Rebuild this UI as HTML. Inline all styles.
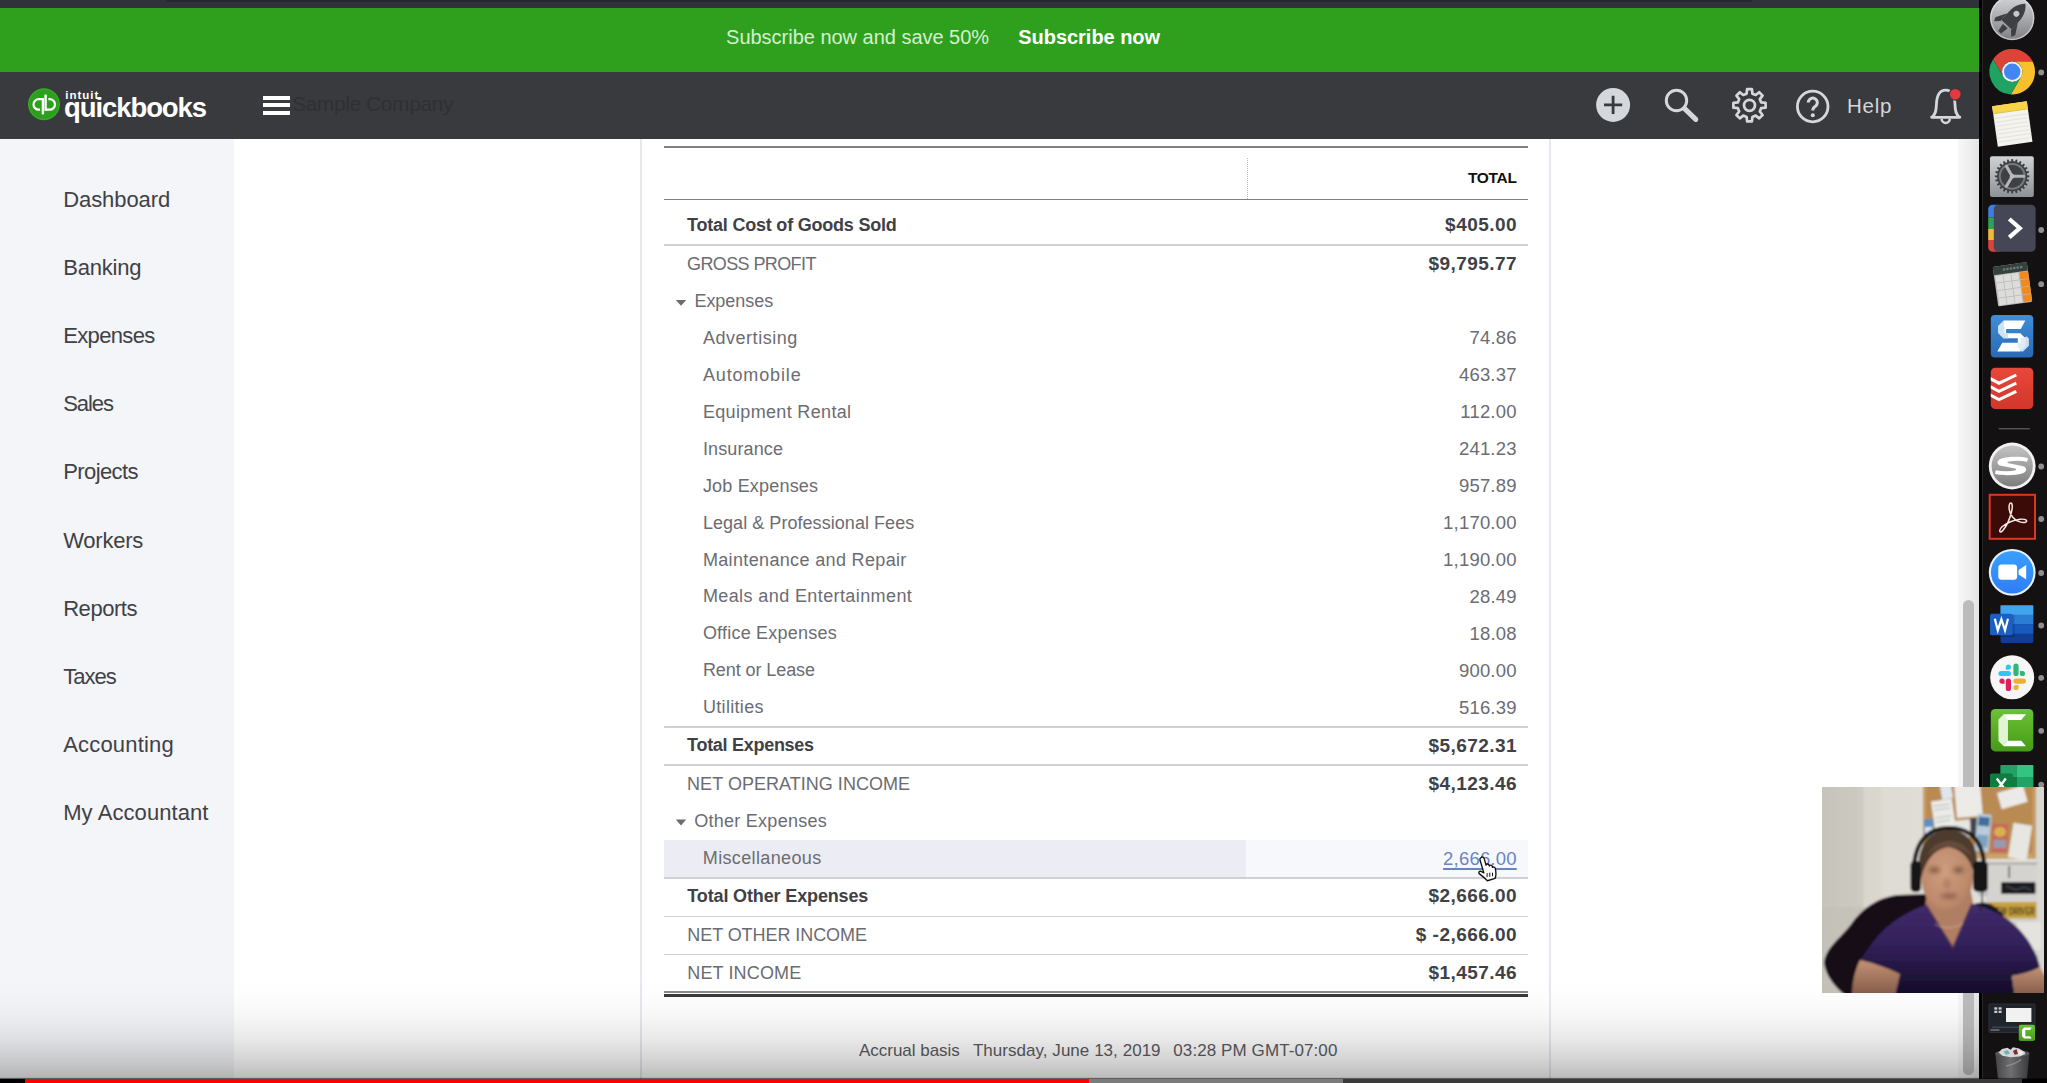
<!DOCTYPE html>
<html><head><meta charset="utf-8"><title>QuickBooks</title>
<style>
html,body{margin:0;padding:0}
body{width:2047px;height:1083px;overflow:hidden;position:relative;background:#141113;font-family:"Liberation Sans",sans-serif}
div,i,span{position:absolute;display:block}
.t{white-space:pre;line-height:normal}
#topstrip{left:0;top:0;width:1979px;height:8px;background:#2f3239}
#topshade{left:166px;top:0;width:1586px;height:2px;background:#26282d}
#banner{left:0;top:8px;width:1979px;height:64px;background:#2ea01e}
#hdr{left:0;top:72px;width:1979px;height:67px;background:#393a3d}
#side{left:0;top:139px;width:234px;height:944px;background:#f4f5f8}
#main{left:234px;top:139px;width:1724px;height:944px;background:#fff}
#track{left:1958px;top:139px;width:21px;height:944px;background:linear-gradient(90deg,#f7f7f7,#ededed 60%,#e4e4e4)}
#thumb{left:1963px;top:600px;width:11px;height:475px;border-radius:6px;background:#bcbcbc}
#edge{left:1979px;top:0;width:3.4px;height:1083px;background:#000;border-right:1px solid #2a2628}
.vb{top:139px;width:2px;height:944px;background:#e6e8ef}
.hl{left:664px;width:864px;height:2px}
#misc{left:664px;top:840px;width:582px;height:37px;background:#ecedf4}
#misc2{left:1246px;top:840px;width:282px;height:37px;background:#f7f8fb}
#dot{left:1247px;top:158px;width:0;height:41px;border-left:1px dotted #b8b8b8}
.bar{left:263px;width:27px;height:4px;background:#fff}
#fade{left:0;top:980px;width:1979px;height:99px;background:linear-gradient(180deg,rgba(0,0,0,0) 0%,rgba(0,0,0,.012) 20%,rgba(0,0,0,.04) 40%,rgba(0,0,0,.09) 60%,rgba(0,0,0,.17) 80%,rgba(0,0,0,.27) 100%)}
#prog{left:0;top:1079px;width:2047px;height:4px;background:#000;box-shadow:0 -1px 1px rgba(0,0,0,.55)}
#prog i{top:0;height:4px}
#prog .a{left:0;width:25px;background:#000}
#prog .b{left:25px;width:1064px;background:#f00}
#prog .c{left:1089px;width:254px;background:#7b7b7b}
#prog .d{left:1343px;width:679px;background:#3a3a3a}
svg{position:absolute;left:0;top:0}

</style></head>
<body>
<div id="topstrip"></div><div id="topshade"></div>
<div id="banner"></div>
<div id="hdr"></div>
<div id="side"></div>
<div id="main"></div>
<div id="track"></div><div id="thumb"></div>
<div id="edge"></div>
<div class="vb" style="left:640px"></div><div class="vb" style="left:1549px"></div>
<div class="bar" style="top:95.5px"></div><div class="bar" style="top:103.3px"></div><div class="bar" style="top:111.1px"></div>
<div id="misc"></div><div id="misc2"></div>
<div class="hl" style="top:146.2px;height:1.6px;background:#808080"></div>
<div class="hl" style="top:198.8px;height:1.6px;background:#808080"></div>
<div id="dot"></div>
<div class="hl" style="top:244.1px;height:1.6px;background:#d0d1d5"></div>
<div class="hl" style="top:726.1px;height:1.6px;background:#d0d1d5"></div>
<div class="hl" style="top:764.2px;height:1.6px;background:#d0d1d5"></div>
<div class="hl" style="top:877.2px;height:1.6px;background:#d0d1d6"></div>
<div class="hl" style="top:915.5px;height:1.6px;background:#d0d1d5"></div>
<div class="hl" style="top:953.5px;height:1.6px;background:#d0d1d5"></div>
<div class="hl" style="top:991.3px;height:1.3px;background:#8a8a8a"></div>
<div class="hl" style="top:994px;height:3px;background:#3a3a3a"></div>

<span class="t" style="top:26.1px;font-size:20px;color:#d6f0cf;letter-spacing:-0.02px;left:726.1px;">Subscribe now and save 50%</span>
<span class="t" style="top:26.1px;font-size:20px;color:#ffffff;font-weight:700;letter-spacing:-0.04px;left:1018.3px;">Subscribe now</span>
<span class="t" style="top:89.2px;font-size:11.5px;color:#ffffff;font-weight:700;letter-spacing:0.97px;left:65.3px;">intuit</span>
<span class="t" style="top:91.9px;font-size:27.5px;color:#ffffff;font-weight:700;letter-spacing:-1.08px;left:64.0px;">quickbooks</span>
<span class="t" style="top:91.5px;font-size:21px;color:#2f3033;letter-spacing:-0.42px;left:292.0px;">Sample Company</span>
<span class="t" style="top:93.9px;font-size:20.5px;color:#d4d7dc;letter-spacing:0.71px;left:1847.0px;">Help</span>
<span class="t" style="top:186.6px;font-size:22px;color:#404145;letter-spacing:-0.07px;left:63.2px;">Dashboard</span>
<span class="t" style="top:254.8px;font-size:22px;color:#404145;letter-spacing:-0.2px;left:63.2px;">Banking</span>
<span class="t" style="top:323.0px;font-size:22px;color:#404145;letter-spacing:-0.65px;left:63.2px;">Expenses</span>
<span class="t" style="top:391.2px;font-size:22px;color:#404145;letter-spacing:-1.05px;left:63.2px;">Sales</span>
<span class="t" style="top:459.4px;font-size:22px;color:#404145;letter-spacing:-0.59px;left:63.2px;">Projects</span>
<span class="t" style="top:527.6px;font-size:22px;color:#404145;letter-spacing:-0.24px;left:63.2px;">Workers</span>
<span class="t" style="top:595.8px;font-size:22px;color:#404145;letter-spacing:-0.46px;left:63.2px;">Reports</span>
<span class="t" style="top:664.0px;font-size:22px;color:#404145;letter-spacing:-1.0px;left:63.2px;">Taxes</span>
<span class="t" style="top:732.2px;font-size:22px;color:#404145;letter-spacing:0.18px;left:63.2px;">Accounting</span>
<span class="t" style="top:800.4px;font-size:22px;color:#404145;letter-spacing:0.08px;left:63.2px;">My Accountant</span>
<span class="t" style="top:169.4px;font-size:15.5px;color:#111111;font-weight:700;letter-spacing:-0.33px;left:1468.0px;">TOTAL</span>
<span class="t" style="top:215.3px;font-size:18px;color:#404145;font-weight:700;letter-spacing:-0.21px;left:687.0px;">Total Cost of Goods Sold</span>
<span class="t" style="top:214.4px;font-size:19px;color:#404145;font-weight:700;letter-spacing:0.45px;right:530.05px;">$405.00</span>
<span class="t" style="top:254.0px;font-size:18px;color:#6b6c72;letter-spacing:-0.6px;left:687.0px;">GROSS PROFIT</span>
<span class="t" style="top:253.1px;font-size:19px;color:#404145;font-weight:700;letter-spacing:0.45px;right:530.05px;">$9,795.77</span>
<span class="t" style="top:290.6px;font-size:18px;color:#6b6c72;letter-spacing:-0.02px;left:694.4px;">Expenses</span>
<span class="t" style="top:327.7px;font-size:18px;color:#6b6c72;letter-spacing:0.54px;left:702.9px;">Advertising</span>
<span class="t" style="top:327.3px;font-size:18.5px;color:#6b6c72;letter-spacing:0.2px;right:530.30px;">74.86</span>
<span class="t" style="top:364.7px;font-size:18px;color:#6b6c72;letter-spacing:0.86px;left:702.9px;">Automobile</span>
<span class="t" style="top:364.2px;font-size:18.5px;color:#6b6c72;letter-spacing:0.2px;right:530.30px;">463.37</span>
<span class="t" style="top:401.6px;font-size:18px;color:#6b6c72;letter-spacing:0.34px;left:702.9px;">Equipment Rental</span>
<span class="t" style="top:401.2px;font-size:18.5px;color:#6b6c72;letter-spacing:0.2px;right:530.30px;">112.00</span>
<span class="t" style="top:438.6px;font-size:18px;color:#6b6c72;letter-spacing:0.12px;left:702.9px;">Insurance</span>
<span class="t" style="top:438.1px;font-size:18.5px;color:#6b6c72;letter-spacing:0.2px;right:530.30px;">241.23</span>
<span class="t" style="top:475.6px;font-size:18px;color:#6b6c72;letter-spacing:0.19px;left:702.9px;">Job Expenses</span>
<span class="t" style="top:475.1px;font-size:18.5px;color:#6b6c72;letter-spacing:0.2px;right:530.30px;">957.89</span>
<span class="t" style="top:512.5px;font-size:18px;color:#6b6c72;letter-spacing:0.05px;left:702.9px;">Legal &amp; Professional Fees</span>
<span class="t" style="top:512.1px;font-size:18.5px;color:#6b6c72;letter-spacing:0.2px;right:530.30px;">1,170.00</span>
<span class="t" style="top:549.5px;font-size:18px;color:#6b6c72;letter-spacing:0.35px;left:702.9px;">Maintenance and Repair</span>
<span class="t" style="top:549.0px;font-size:18.5px;color:#6b6c72;letter-spacing:0.2px;right:530.30px;">1,190.00</span>
<span class="t" style="top:586.4px;font-size:18px;color:#6b6c72;letter-spacing:0.4px;left:702.9px;">Meals and Entertainment</span>
<span class="t" style="top:586.0px;font-size:18.5px;color:#6b6c72;letter-spacing:0.2px;right:530.30px;">28.49</span>
<span class="t" style="top:623.4px;font-size:18px;color:#6b6c72;letter-spacing:0.22px;left:702.9px;">Office Expenses</span>
<span class="t" style="top:622.9px;font-size:18.5px;color:#6b6c72;letter-spacing:0.2px;right:530.30px;">18.08</span>
<span class="t" style="top:660.4px;font-size:18px;color:#6b6c72;letter-spacing:-0.08px;left:702.9px;">Rent or Lease</span>
<span class="t" style="top:659.9px;font-size:18.5px;color:#6b6c72;letter-spacing:0.2px;right:530.30px;">900.00</span>
<span class="t" style="top:697.3px;font-size:18px;color:#6b6c72;letter-spacing:0.33px;left:702.9px;">Utilities</span>
<span class="t" style="top:696.9px;font-size:18.5px;color:#6b6c72;letter-spacing:0.2px;right:530.30px;">516.39</span>
<span class="t" style="top:735.4px;font-size:18px;color:#404145;font-weight:700;letter-spacing:-0.29px;left:687.1px;">Total Expenses</span>
<span class="t" style="top:734.5px;font-size:19px;color:#404145;font-weight:700;letter-spacing:0.45px;right:530.05px;">$5,672.31</span>
<span class="t" style="top:773.7px;font-size:18px;color:#6b6c72;letter-spacing:0.03px;left:687.1px;">NET OPERATING INCOME</span>
<span class="t" style="top:772.8px;font-size:19px;color:#404145;font-weight:700;letter-spacing:0.45px;right:530.05px;">$4,123.46</span>
<span class="t" style="top:811.0px;font-size:18px;color:#6b6c72;letter-spacing:0.27px;left:694.2px;">Other Expenses</span>
<span class="t" style="top:848.0px;font-size:18px;color:#6b6c72;letter-spacing:0.36px;left:702.8px;">Miscellaneous</span>
<span class="t" style="top:847.6px;font-size:18.5px;color:#6884c8;letter-spacing:0.2px;right:530.30px;text-decoration:underline;text-underline-offset:2.5px;text-decoration-thickness:1.6px;">2,666.00</span>
<span class="t" style="top:885.7px;font-size:18px;color:#404145;font-weight:700;letter-spacing:-0.14px;left:687.3px;">Total Other Expenses</span>
<span class="t" style="top:884.8px;font-size:19px;color:#404145;font-weight:700;letter-spacing:0.45px;right:530.05px;">$2,666.00</span>
<span class="t" style="top:925.0px;font-size:18px;color:#6b6c72;letter-spacing:-0.07px;left:687.3px;">NET OTHER INCOME</span>
<span class="t" style="top:924.1px;font-size:19px;color:#404145;font-weight:700;letter-spacing:0.45px;right:530.05px;">$ -2,666.00</span>
<span class="t" style="top:963.2px;font-size:18px;color:#6b6c72;letter-spacing:0.13px;left:687.3px;">NET INCOME</span>
<span class="t" style="top:962.3px;font-size:19px;color:#404145;font-weight:700;letter-spacing:0.45px;right:530.05px;">$1,457.46</span>
<span class="t" style="top:1040.8px;font-size:17px;color:#5a5b5f;letter-spacing:-0.02px;left:859.0px;">Accrual basis</span>
<span class="t" style="top:1040.8px;font-size:17px;color:#5a5b5f;letter-spacing:0.04px;left:972.9px;">Thursday, June 13, 2019</span>
<span class="t" style="top:1040.8px;font-size:17px;color:#5a5b5f;letter-spacing:0.09px;left:1173.3px;">03:28 PM GMT-07:00</span>
<svg width="2047" height="1083" viewBox="0 0 2047 1083">

<!-- ===== header / page icons ===== -->
<g id="qb">
 <circle cx="44" cy="104.2" r="16" fill="#2ca01c"/>
 <circle cx="44" cy="104.2" r="15.3" fill="none" stroke="#4db53e" stroke-width="0.9" opacity=".55"/>
 <g fill="none" stroke="#fff" stroke-width="2.2">
  <path d="M42.9,99.1 h-4.100 a5.300,5.300 0 0 0 0,10.600 h1.300"/>
  <path d="M42.9,98 v16.400" stroke-width="2.400"/>
  <path d="M45.6,109.700 h4.100 a5.300,5.300 0 0 0 0,-10.600 h-1.300"/>
  <path d="M45.6,94.600 v16.200" stroke-width="2.400"/>
 </g>
</g>
<g id="hicons" fill="none" stroke="#d4d7dc">
 <circle cx="1613.1" cy="104.9" r="17" fill="#d4d7dc" stroke="none"/>
 <path d="M1604,104.9 h18.200 M1613.1,95.800 v18.200" stroke="#393a3d" stroke-width="2.800"/>
 <circle cx="1676.500" cy="100.500" r="10.200" stroke-width="3"/>
 <path d="M1684.600,108.600 L1695.800,119.400" stroke-width="5" stroke-linecap="round"/>
 <path d="M1746.6,93.7 L1747.1,89.2 L1751.9,89.2 L1752.4,93.7 L1755.7,95.0 L1759.2,92.2 L1762.6,95.6 L1759.8,99.1 L1761.1,102.4 L1765.6,102.9 L1765.6,107.7 L1761.1,108.2 L1759.8,111.5 L1762.6,115.0 L1759.2,118.4 L1755.7,115.6 L1752.4,116.9 L1751.9,121.4 L1747.1,121.4 L1746.6,116.9 L1743.3,115.6 L1739.8,118.4 L1736.4,115.0 L1739.2,111.5 L1737.9,108.2 L1733.4,107.7 L1733.4,102.9 L1737.9,102.4 L1739.2,99.1 L1736.4,95.6 L1739.8,92.2 L1743.3,95.0Z" stroke-width="2.700" stroke-linejoin="round"/>
 <circle cx="1749.5" cy="105.3" r="5.500" stroke-width="2.700"/>
 <circle cx="1812.7" cy="106.5" r="15.300" stroke-width="2.800"/>
 <path d="M1808.300,102.600 a4.500,4.500 0 1 1 6.800,3.900 c-1.600,1 -2.300,1.900 -2.300,3.900" stroke-width="3"/>
 <circle cx="1812.800" cy="115.200" r="2" fill="#d4d7dc" stroke="none"/>
 <path d="M1931.600,117.300 c4.200,-2.600 4.600,-7 4.800,-12.500 c0.300,-9 3.500,-14.600 9.300,-14.600 s9,5.600 9.300,14.600 c0.200,5.500 0.600,9.900 4.800,12.500 z" stroke-width="2.800" stroke-linejoin="round"/>
 <path d="M1941.600,118.800 a4.100,4.100 0 0 0 8.200,0" stroke-width="2.500"/>
 <circle cx="1955.3" cy="94.2" r="6.600" fill="#393a3d" stroke="none"/>
 <circle cx="1955.3" cy="94.2" r="5.300" fill="#e8383d" stroke="none"/>
</g>
<g fill="#6b6c72">
 <path d="M675.8,299.9 h10.400 l-5.200,5.800z"/>
 <path d="M675.8,819.6 h10.400 l-5.200,5.800z"/>
</g>
<!-- hand cursor -->
<g id="cursor" transform="translate(1477.2,856) scale(0.9)">
 <path d="M4.500,1.500 c1.300,-0.900 2.900,0 3.300,1.500 l2,7.200 c0.200,-1.500 2.500,-1.800 3.200,-0.300 l0.500,1.200 c0.500,-1.300 2.700,-1.200 3.200,0.300 l0.400,1.300 c0.800,-1 2.700,-0.500 3,1 c0.900,4 1.500,7.500 -0.300,11.200 l-8.500,2.600 c-2.600,-2.700 -5.600,-5.200 -8.800,-7.600 c-1.600,-1.200 -0.300,-3.500 1.700,-2.800 l3.200,1.600 l-4.300,-14.200 c-0.300,-1.200 0.400,-2.500 1.400,-3z" fill="#fff" stroke="#111" stroke-width="1.5" stroke-linejoin="round"/>
 <path d="M11,19 v4.500 M14,18.500 v4.500 M17,18.500 v4" stroke="#111" stroke-width="1.100" fill="none"/>
</g>
<defs>
<linearGradient id="gLaunch" x1="0" y1="0" x2="0" y2="1"><stop offset="0" stop-color="#d2d4d6"/><stop offset="1" stop-color="#7e8084"/></linearGradient>
<linearGradient id="gSys" x1="0" y1="0" x2="0" y2="1"><stop offset="0" stop-color="#cfd3d6"/><stop offset="1" stop-color="#8e9296"/></linearGradient>
<linearGradient id="gSnag" x1="0" y1="0" x2="0" y2="1"><stop offset="0" stop-color="#3f8fd8"/><stop offset="1" stop-color="#2a68b4"/></linearGradient>
<linearGradient id="gTodo" x1="0" y1="0" x2="0" y2="1"><stop offset="0" stop-color="#e8483a"/><stop offset="1" stop-color="#d2372b"/></linearGradient>
<linearGradient id="gScan" x1="0" y1="0" x2="0" y2="1"><stop offset="0" stop-color="#c4c4c4"/><stop offset="1" stop-color="#7d7d7d"/></linearGradient>
<linearGradient id="gZoom" x1="0" y1="0" x2="0" y2="1"><stop offset="0" stop-color="#38a0ff"/><stop offset="1" stop-color="#2f7df6"/></linearGradient>
<linearGradient id="gCam" x1="0" y1="0" x2="0" y2="1"><stop offset="0" stop-color="#6cc234"/><stop offset="1" stop-color="#469a18"/></linearGradient>
<linearGradient id="gTrash" x1="0" y1="0" x2="1" y2="0"><stop offset="0" stop-color="#4a4a4c"/><stop offset=".45" stop-color="#77777a"/><stop offset="1" stop-color="#3c3c3e"/></linearGradient>
<clipPath id="cpWeb"><rect x="1822" y="787" width="222" height="206"/></clipPath>
<clipPath id="cpAbove"><rect x="1983" y="0" width="64" height="787"/></clipPath>
</defs>
<g id="dock">
<circle cx="2041.2" cy="72.4" r="2.9" fill="#8f8f91"/>
<circle cx="2041.2" cy="230" r="2.9" fill="#8f8f91"/>
<circle cx="2041.2" cy="284.2" r="2.9" fill="#8f8f91"/>
<circle cx="2041.2" cy="466.5" r="2.9" fill="#8f8f91"/>
<circle cx="2041.2" cy="519" r="2.9" fill="#8f8f91"/>
<circle cx="2041.2" cy="573" r="2.9" fill="#8f8f91"/>
<circle cx="2041.2" cy="625.5" r="2.9" fill="#8f8f91"/>
<circle cx="2041.2" cy="677.8" r="2.9" fill="#8f8f91"/>
<circle cx="2041.2" cy="730.8" r="2.9" fill="#8f8f91"/>
<g><circle cx="2012.2" cy="18" r="22.2" fill="url(#gLaunch)"/><circle cx="2012.2" cy="18" r="21.4" fill="none" stroke="#e4e5e6" stroke-width="1.2" opacity=".7"/>
<g transform="translate(2011.7,19) rotate(42) scale(1.28)" fill="#3d3f43">
<path d="M0,-16 c4.500,4 5.500,9 5.500,14 v8 h-11 v-8 c0,-5 1,-10 5.500,-14z"/>
<path d="M-5.500,-1 l-5,8.500 l1.500,3 l3.500,-3.500z M5.500,-1 l5,8.500 l-1.500,3 l-3.500,-3.500z"/>
<path d="M-2.500,7.500 h5 l-1,6.500 h-3z"/>
<circle cx="0" cy="-5.500" r="2.300" fill="#c5c7c9"/>
</g></g>
<g><path d="M2012.20,61.50 L2032.59,61.50 A22.8,22.8 0 0 0 1993.17,59.14 L2003.37,76.80 A10.2,10.2 0 0 1 2012.20,61.50Z" fill="#db4437"/><path d="M2021.03,76.80 L2010.84,94.46 A22.8,22.8 0 0 0 2032.59,61.50 L2012.20,61.50 A10.2,10.2 0 0 1 2021.03,76.80Z" fill="#f6c12d"/><path d="M2003.37,76.80 L1993.17,59.14 A22.8,22.8 0 0 0 2010.84,94.46 L2021.03,76.80 A10.2,10.2 0 0 1 2003.37,76.80Z" fill="#1ea362"/><circle cx="2012.2" cy="71.7" r="10.2" fill="#f1f1f1"/><circle cx="2012.2" cy="71.7" r="8.2" fill="#4285f4"/></g>
<g transform="translate(2012.300,124) rotate(-8)">
<rect x="-17.500" y="-20.500" width="35" height="41" fill="#f4f3ee"/>
<rect x="-17.500" y="-20.500" width="35" height="7.500" fill="#f7d546"/>
<path d="M-17.500,-12.800 h35" stroke="#d9b72f" stroke-width="0.8"/>
<g stroke="#dddcd6" stroke-width="0.7"><path d="M-17.500,-8 h35"/><path d="M-17.500,-4 h35"/><path d="M-17.500,0 h35"/><path d="M-17.500,4 h35"/><path d="M-17.500,8 h35"/><path d="M-17.500,12 h35"/><path d="M-17.500,16 h35"/></g>
</g>
<g><rect x="1990" y="156.200" width="43.800" height="40.800" rx="2" fill="url(#gSys)"/>
<path d="M2027.16,175.20 L2029.48,175.49 L2029.48,177.11 L2027.16,177.40 L2026.93,179.11 L2029.10,179.99 L2028.68,181.56 L2026.37,181.23 L2025.70,182.83 L2027.57,184.23 L2026.76,185.65 L2024.61,184.73 L2023.55,186.10 L2025.00,187.94 L2023.84,189.10 L2022.00,187.65 L2020.63,188.71 L2021.55,190.86 L2020.13,191.67 L2018.73,189.80 L2017.13,190.47 L2017.46,192.78 L2015.89,193.20 L2015.01,191.03 L2013.30,191.26 L2013.01,193.58 L2011.39,193.58 L2011.10,191.26 L2009.39,191.03 L2008.51,193.20 L2006.94,192.78 L2007.27,190.47 L2005.67,189.80 L2004.27,191.67 L2002.85,190.86 L2003.77,188.71 L2002.40,187.65 L2000.56,189.10 L1999.40,187.94 L2000.85,186.10 L1999.79,184.73 L1997.64,185.65 L1996.83,184.23 L1998.70,182.83 L1998.03,181.23 L1995.72,181.56 L1995.30,179.99 L1997.47,179.11 L1997.24,177.40 L1994.92,177.11 L1994.92,175.49 L1997.24,175.20 L1997.47,173.49 L1995.30,172.61 L1995.72,171.04 L1998.03,171.37 L1998.70,169.77 L1996.83,168.37 L1997.64,166.95 L1999.79,167.87 L2000.85,166.50 L1999.40,164.66 L2000.56,163.50 L2002.40,164.95 L2003.77,163.89 L2002.85,161.74 L2004.27,160.93 L2005.67,162.80 L2007.27,162.13 L2006.94,159.82 L2008.51,159.40 L2009.39,161.57 L2011.10,161.34 L2011.39,159.02 L2013.01,159.02 L2013.30,161.34 L2015.01,161.57 L2015.89,159.40 L2017.46,159.82 L2017.13,162.13 L2018.73,162.80 L2020.13,160.93 L2021.55,161.74 L2020.63,163.89 L2022.00,164.95 L2023.84,163.50 L2025.00,164.66 L2023.55,166.50 L2024.61,167.87 L2026.76,166.95 L2027.57,168.37 L2025.70,169.77 L2026.37,171.37 L2028.68,171.04 L2029.10,172.61 L2026.93,173.49Z" fill="#3e4043"/>
<circle cx="2012.2" cy="176.3" r="13.400" fill="#77797c"/>
<circle cx="2012.2" cy="176.3" r="11.400" fill="#3f4043"/>
<g stroke="#b4b6b8" stroke-width="3" stroke-linecap="round"><path d="M2012.2,176.3 L2006.4,166.3 M2012.2,176.3 L2023.7,176.3 M2012.2,176.3 L2006.4,186.3"/></g>
<circle cx="2012.2" cy="176.3" r="2.400" fill="#b9bbbd"/>
</g>
<g>
<clipPath id="cpG"><rect x="1988.200" y="204.700" width="14" height="47.100" rx="4.500"/></clipPath>
<g clip-path="url(#cpG)"><rect x="1988" y="204" width="14" height="13.500" fill="#3f7de0"/><rect x="1988" y="217.500" width="14" height="11.500" fill="#2fa354"/><rect x="1988" y="229" width="14" height="11" fill="#f0bb35"/><rect x="1988" y="240" width="14" height="12" fill="#d9453a"/></g>
<rect x="1993.800" y="204.700" width="41.800" height="47.100" rx="4.500" fill="#454757"/>
<path d="M2009.300,219 l10.500,9.200 l-10.500,9.200" fill="none" stroke="#fff" stroke-width="4.200" stroke-linejoin="miter"/>
</g>
<g transform="translate(2012.500,284.300) rotate(-8) scale(0.93)">
<rect x="-18.500" y="-21.500" width="37" height="43" rx="1.500" fill="#b9b9b7"/>
<rect x="-18.500" y="-21.500" width="37" height="9" fill="#36403d"/>
<path d="M-8,-17 h22" stroke="#6d7a76" stroke-width="2.500" stroke-dasharray="2.500 1.200"/>
<rect x="-17.0" y="-11.5" width="7.800" height="7.400" fill="#dcdcda"/><rect x="-17.0" y="-3.3" width="7.800" height="7.400" fill="#dcdcda"/><rect x="-17.0" y="4.9" width="7.800" height="7.400" fill="#dcdcda"/><rect x="-17.0" y="13.1" width="7.800" height="7.400" fill="#dcdcda"/><rect x="-8.4" y="-11.5" width="7.800" height="7.400" fill="#dcdcda"/><rect x="-8.4" y="-3.3" width="7.800" height="7.400" fill="#dcdcda"/><rect x="-8.4" y="4.9" width="7.800" height="7.400" fill="#dcdcda"/><rect x="-8.4" y="13.1" width="7.800" height="7.400" fill="#dcdcda"/><rect x="0.2" y="-11.5" width="7.800" height="7.400" fill="#dcdcda"/><rect x="0.2" y="-3.3" width="7.800" height="7.400" fill="#dcdcda"/><rect x="0.2" y="4.9" width="7.800" height="7.400" fill="#dcdcda"/><rect x="0.2" y="13.1" width="7.800" height="7.400" fill="#dcdcda"/><rect x="9.200" y="-11.5" width="9.300" height="7.400" fill="#f08a1c"/><rect x="9.200" y="-3.3" width="9.300" height="7.400" fill="#f08a1c"/><rect x="9.200" y="4.9" width="9.300" height="7.400" fill="#f08a1c"/><rect x="9.200" y="13.1" width="9.300" height="7.400" fill="#f08a1c"/>
</g>
<g><rect x="1990.800" y="315" width="42.500" height="42.500" rx="4" fill="url(#gSnag)"/>
<path d="M2025.300,320.500 h-21.500 l-5.500,5.500 v7 l5.200,5.200 h14.300 v4.600 h-15.500 l-5,8.700 h22.500 l5.800,-5.800 v-7.200 l-5.200,-5.200 h-14.300 v-4.200 h14.700z" fill="#fff"/>
<path d="M2003.800,320.500 l-5.500,5.500 v7 l5.200,5.200 h4.500 v-4.900 l-3.500,0 v-4.200z" fill="#cfe3f6"/>
<path d="M2020.600,338.200 v4.600 h-3 l0,4 l3,4.700 h2.500 l5.800,-5.800 v-7.200 l-2,-2z" fill="#dcebf8" opacity=".9"/>
</g>
<g><rect x="1990.800" y="367.700" width="42.500" height="41.300" rx="4.500" fill="url(#gTodo)"/>
<clipPath id="cpT"><rect x="1990.800" y="367.700" width="42.500" height="41.300" rx="4.500"/></clipPath>
<g clip-path="url(#cpT)" fill="none" stroke="#fff" stroke-width="3" stroke-linejoin="miter">
<path d="M1989.500,378.200 l9.500,5 l17.300,-8.200"/><path d="M1989.500,386.400 l9.500,5 l17.300,-8.200"/><path d="M1989.500,394.600 l9.500,5 l17.300,-8.200"/></g>
</g>
<rect x="1998.700" y="428.100" width="31.100" height="1.300" fill="#5a5a5c"/>
<g><circle cx="2012.2" cy="466" r="23.400" fill="#f2f2f2"/><circle cx="2012.2" cy="466" r="20.600" fill="url(#gScan)"/>
<path d="M2028,458 c-8,-1.800 -20,-1.500 -26.500,0.500 c-5,1.600 -5.500,6 -0.500,7.300 l14,2.700 c1.800,0.400 1.500,1.700 -0.300,2 c-6,1 -13,0.800 -19,-0.300 l-0.700,3.900 c8,1.700 20,1.600 27,-0.500 c5.500,-1.700 5.700,-6.400 0.300,-7.600 l-13.800,-2.700 c-1.600,-0.400 -1.400,-1.600 0.400,-1.900 c6,-0.900 12.500,-0.700 18.300,0.300z" fill="#fff"/>
</g>
<g><rect x="1989.700" y="494.800" width="45.300" height="44" fill="#3b0b08" stroke="#d93a1f" stroke-width="2"/>
<path d="M2000,531.500 c-1.500,-2.500 3.500,-6.800 10.500,-9.700 c6.500,-2.700 14,-3.600 15.800,-1.500 c1.500,1.800 -2,3 -6.500,1.600 c-5.500,-1.700 -9.800,-6.800 -10.600,-12.500 c-0.500,-3.800 0.300,-6.300 1.600,-6.300 c1.700,0 1.900,4 0.600,9.200 c-1.700,6.800 -5.300,14.300 -8.200,17.800 c-1.400,1.700 -2.700,2.200 -3.200,1.400z" fill="none" stroke="#f5e9e6" stroke-width="1.500"/>
</g>
<g><circle cx="2012.2" cy="572.300" r="23.400" fill="#e8f1ff"/><circle cx="2012.2" cy="572.300" r="21.300" fill="url(#gZoom)"/>
<rect x="1998.300" y="564.500" width="18.800" height="15.300" rx="3.200" fill="#fff"/>
<path d="M2018.600,570 l7.600,-5 v14.600 l-7.600,-5z" fill="#fff"/>
</g>
<g><rect x="2000.500" y="605.300" width="32.800" height="37.700" rx="2" fill="#103f91"/>
<rect x="2000.500" y="605.300" width="32.800" height="9.600" fill="#41a5ee"/><rect x="2000.500" y="614.900" width="32.800" height="9.400" fill="#2b7cd3"/><rect x="2000.500" y="624.300" width="32.800" height="9.400" fill="#185abd"/>
<rect x="2000.500" y="615" width="14" height="22" fill="#000" opacity=".18"/>
<rect x="1990" y="613.700" width="22.800" height="21.600" rx="1.800" fill="#1c5fc4"/>
<path d="M1994.800,618.800 l3,11.600 l3.600,-11 l3.600,11 l3,-11.600" fill="none" stroke="#fff" stroke-width="2.200" stroke-linejoin="miter"/>
</g>
<g><circle cx="2012.2" cy="677.3" r="22" fill="#f6f6f6"/><g transform="translate(2012.2,677.3) rotate(0)" fill="#36c5f0"><rect x="-13.8" y="-6.4" width="12.6" height="5.2" rx="2.6"/><path d="M-6.4,-10.2 a2.6,2.6 0 1 1 2.6,2.6 h-2.6 z"/></g><g transform="translate(2012.2,677.3) rotate(90)" fill="#2eb67d"><rect x="-13.8" y="-6.4" width="12.6" height="5.2" rx="2.6"/><path d="M-6.4,-10.2 a2.6,2.6 0 1 1 2.6,2.6 h-2.6 z"/></g><g transform="translate(2012.2,677.3) rotate(180)" fill="#ecb22e"><rect x="-13.8" y="-6.4" width="12.6" height="5.2" rx="2.6"/><path d="M-6.4,-10.2 a2.6,2.6 0 1 1 2.6,2.6 h-2.6 z"/></g><g transform="translate(2012.2,677.3) rotate(270)" fill="#e01e5a"><rect x="-13.8" y="-6.4" width="12.6" height="5.2" rx="2.6"/><path d="M-6.4,-10.2 a2.6,2.6 0 1 1 2.6,2.6 h-2.6 z"/></g></g>
<g><rect x="1990.800" y="708.900" width="42.500" height="42.500" rx="4.500" fill="url(#gCam)"/>
<path d="M2026,714.300 h-22 l-5.300,5.300 v21.400 l5.300,5.300 h22 l-4.800,-5.600 h-13.500 v-20.600 h13.500z" fill="#fff"/>
<path d="M2004,714.300 l-5.300,5.300 v21.400 l5.300,5.300 l3.700,-5.600 v-20.600z" fill="#e3f3d6"/>
</g>
<g clip-path="url(#cpAbove)"><rect x="2000.500" y="765" width="32.800" height="37.700" rx="2" fill="#185c37"/>
<rect x="2000.500" y="765" width="16.400" height="12" fill="#21a366"/><rect x="2016.900" y="765" width="16.400" height="12" fill="#33c481"/>
<rect x="2000.500" y="777" width="16.400" height="12" fill="#107c41"/><rect x="2016.900" y="777" width="16.400" height="12" fill="#21a366"/>
<rect x="1990" y="773.400" width="22.800" height="21.600" rx="1.800" fill="#107c41"/>
<path d="M1996.800,778.500 l9,12 M2005.800,778.500 l-9,12" stroke="#fff" stroke-width="2.400"/>
<circle cx="2041.200" cy="784.600" r="2.900" fill="#8f8f91"/>
</g>
<g><rect x="1988.900" y="1004" width="46.100" height="28.500" rx="1" fill="#20242b"/>
<rect x="1988.900" y="1004" width="46.100" height="28.500" rx="1" fill="none" stroke="#3a3f47" stroke-width=".6"/>
<rect x="2006" y="1008" width="25.400" height="14" fill="#f1f1f1"/>
<g fill="#c9ccd0"><rect x="1994.300" y="1007.300" width="3" height="2.300"/><rect x="1998.600" y="1007.300" width="3" height="2.300"/><rect x="1994.300" y="1010.700" width="3" height="2.300"/><rect x="1998.600" y="1010.700" width="3" height="2.300"/></g>
<rect x="1992" y="1026.500" width="26" height="1.600" fill="#3a4450"/><rect x="1990.500" y="1029" width="9" height="2" fill="#59626d"/>
<rect x="2018.800" y="1024.800" width="16.200" height="16.200" rx="1.800" fill="url(#gCam)"/>
<path d="M2031.800,1027.600 h-7.600 l-2.200,2.200 v6.600 l2.200,2.200 h7.600 l-1.800,-2.300 h-4.700 v-6.400 h4.700z" fill="#fff"/>
</g>
<g><path d="M1995.300,1053.500 h34.200 l-2.700,25.500 h-28.800z" fill="url(#gTrash)" opacity=".92"/>
<ellipse cx="2012.400" cy="1053.500" rx="17.100" ry="3.400" fill="#58585a"/>
<path d="M1998.500,1052.500 l3.500,-3.500 l5.500,-1.200 l3,2 l2.500,-2.500 l6,1.200 l5.500,3.200 l1,2.300 l-6,2.500 l-9,0.800 l-8,-1.500z" fill="#d8d6d6"/>
<path d="M2003.500,1051.500 l4,-1.500 l2.500,3.500 l-4,1.500z" fill="#6bb5b0"/><path d="M2013,1051 l3.500,-2 l1.500,5 l-3.500,0.800z" fill="#7a2f35"/><path d="M2019,1050.500 l4,1.500 l-1.500,3 l-3,-0.500z" fill="#efefef"/>
<path d="M2006,1066 c5,-1 11,-3 15,-6.500" stroke="#9a9a9c" stroke-width="1.400" fill="none" opacity=".7"/>
</g>
</g><!-- ===== webcam picture-in-picture ===== -->
<defs>
<filter id="fSoft" x="-5%" y="-5%" width="110%" height="110%"><feGaussianBlur stdDeviation="0.9"/></filter>
<filter id="fSoft2" x="-20%" y="-20%" width="140%" height="140%"><feGaussianBlur stdDeviation="2.2"/></filter>
<linearGradient id="gWall" x1="0" y1="0" x2="1" y2="0"><stop offset="0" stop-color="#c6c3ba"/><stop offset=".19" stop-color="#cdcac1"/><stop offset=".2" stop-color="#d9d6cd"/><stop offset=".27" stop-color="#dad7ce"/><stop offset=".28" stop-color="#dfdcd4"/><stop offset="1" stop-color="#e3e1da"/></linearGradient>
<linearGradient id="gShirt" x1="0" y1="0" x2="0" y2="1"><stop offset="0" stop-color="#412b6b"/><stop offset=".45" stop-color="#32205a"/><stop offset=".8" stop-color="#1e1339"/><stop offset="1" stop-color="#140c29"/></linearGradient>
<linearGradient id="gArm" x1="0" y1="0" x2="0" y2="1"><stop offset="0" stop-color="#c39273"/><stop offset="1" stop-color="#83594a"/></linearGradient>
<radialGradient id="gFace" cx=".45" cy=".45" r=".65"><stop offset="0" stop-color="#cf9d7f"/><stop offset=".7" stop-color="#bd8a6c"/><stop offset="1" stop-color="#a5745a"/></radialGradient>
</defs>
<g clip-path="url(#cpWeb)">
<g transform="translate(1822,787)" filter="url(#fSoft)">
 <rect x="-3" y="-3" width="228" height="212" fill="url(#gWall)"/>
 <rect x="-3" y="120" width="50" height="90" fill="#c2bfb6" opacity=".6"/>
 <!-- cork board -->
 <rect x="101" y="-3" width="113" height="75" fill="#b98a51"/>
 <rect x="101" y="66.500" width="113" height="5.500" fill="#caa26c"/>
 <rect x="101" y="-3" width="3" height="75" fill="#c79d66"/><rect x="210.500" y="-3" width="3.500" height="75" fill="#c79d66"/>
 <rect x="214" y="-3" width="11" height="212" fill="#d9d7d1"/>
 <!-- pinned papers -->
 <rect x="119" y="-2" width="11" height="14" fill="#dfe6ee" transform="rotate(-10 124 5)"/>
 <rect x="111" y="13" width="21" height="30" fill="#ebebe8" transform="rotate(-8 121 28)"/>
 <g stroke="#a9acb2" stroke-width=".8" transform="rotate(-8 121 28)"><path d="M113,18 h16 M113,22 h16 M113,30 h16 M113,34 h14"/></g>
 <rect x="133.500" y="-3" width="26" height="33" fill="#ecebe8" transform="rotate(-5 146 14)"/>
 <rect x="177" y="2" width="27" height="17" fill="#eceae6" transform="rotate(-16 190 11)"/>
 <rect x="102" y="32" width="9.500" height="17.500" fill="#5d8fc0"/><rect x="103" y="40" width="7.500" height="6" fill="#d7e3ee"/>
 <rect x="133.500" y="33" width="15" height="17.500" fill="#e6e6e3" transform="rotate(-6 141 42)"/>
 <rect x="148.500" y="31" width="6" height="19" fill="#3a4652"/>
 <rect x="154" y="27" width="14" height="38" fill="#b9cbda" transform="rotate(5 161 46)"/>
 <rect x="155.500" y="30" width="11" height="9" fill="#3f6e9d" transform="rotate(5 161 46)"/><rect x="155.500" y="48" width="11" height="12" fill="#7fa2c1" transform="rotate(5 161 46)"/>
 <rect x="170" y="37" width="15.500" height="28.500" fill="#c7685a" transform="rotate(2 178 51)"/>
 <ellipse cx="178" cy="45" rx="6" ry="5" fill="#d9b04f"/><rect x="171.500" y="53" width="12.500" height="8" fill="#8aa8c8" opacity=".8"/>
 <rect x="188.500" y="37" width="19" height="35" fill="#e7e6e1" transform="rotate(9 198 55)"/>
 <!-- white board lower right -->
 <rect x="164" y="75" width="51" height="134" fill="#d4d3cf"/>
 <rect x="164" y="75" width="51" height="3" fill="#b7b6b2"/>
 <rect x="186.500" y="79" width="1.500" height="12" fill="#4a4a4a"/>
 <rect x="156" y="96" width="10" height="13" fill="#bfc3c7"/>
 <rect x="179" y="95" width="34.500" height="12" rx="1.500" fill="#1d1d20"/>
 <path d="M184,99 l10,4 l8,-3 l7,3" stroke="#55585c" stroke-width="1" fill="none"/>
 <rect x="167" y="115" width="47.500" height="16.500" fill="#c7a03f"/>
 <text x="169" y="128" font-family="Liberation Sans, sans-serif" font-weight="700" font-size="10.500" textLength="44" lengthAdjust="spacingAndGlyphs" fill="#4e401d">NEW DRIVER</text>
 <rect x="195" y="135" width="24" height="28" fill="#e4e3df"/>
 <rect x="212" y="168" width="4" height="20" fill="#b4b3b0"/>
 <!-- chair -->
 <path d="M2,176 C4,160 18,152 30,136 C40,122 56,110 76,108 L104,107 L112,140 L100,209 L24,209 C14,201 4,190 2,176Z" fill="#141116"/>
 <path d="M150,118 C165,112 172,118 182,128 L160,150Z" fill="#18141c"/>
 <!-- headphone band behind head -->
 <path d="M92,92 C90,55 106,41 127,41 C148,41 165,54 162,92" fill="none" stroke="#151516" stroke-width="4.200"/>
 <!-- neck -->
 <path d="M106,100 h42 l4,20 l-21,42 l-28,-42z" fill="#b07e63"/>
 <!-- shirt -->
 <path d="M104,118 C86,124 62,138 49,158 L38,173 C52,176 66,181 78,187 L73,209 L193,209 L190,189 C200,187 210,185 218,180 C213,160 200,141 181,129 C170,123 160,119 150,117 L131,161Z" fill="url(#gShirt)"/>
 <path d="M104,118 L131,161 L150,117" fill="none" stroke="#4a2b58" stroke-width="2" opacity=".8"/>
 <path d="M113,137 c8,5 20,5 28,-1" stroke="#d8c9b8" stroke-width=".8" fill="none" opacity=".7"/>
 <!-- arms -->
 <path d="M38,173 C32,185 30,198 30,209 L73,209 L78,187 C66,181 52,176 38,173Z" fill="url(#gArm)"/>
 <path d="M190,189 C200,187 210,185 218,180 L225,192 L225,209 L193,209Z" fill="url(#gArm)"/>
 <!-- head (generic) -->
 <ellipse cx="125" cy="89" rx="26" ry="35.500" fill="url(#gFace)"/>
 <path d="M98,96 C92,64 104,43 127,43 C151,43 160,66 153,96 C152,80 146,64 127,60 C109,62 102,78 98,96Z" fill="#4d3b2d"/>
 <path d="M104,70 C110,58 118,54 128,54 C138,54 146,60 150,70 C142,62 134,60 127,60 C118,60 110,63 104,70Z" fill="#6b5140" opacity=".8"/>
 <g filter="url(#fSoft2)" opacity=".75">
  <ellipse cx="112.500" cy="83" rx="5.500" ry="2.600" fill="#5a3b2c"/><ellipse cx="136.500" cy="83" rx="5.500" ry="2.600" fill="#5a3b2c"/>
  <ellipse cx="125" cy="97" rx="3.500" ry="5" fill="#a8735a"/>
  <ellipse cx="127" cy="109" rx="8.500" ry="2.800" fill="#8a4d45"/>
 </g>
 <!-- ear cups -->
 <rect x="88.500" y="74" width="10.500" height="31" rx="4.500" fill="#141415"/>
 <rect x="151" y="74" width="15" height="31" rx="5" fill="#141415"/>
 <path d="M160,104 c1,8 0,14 -2,20" stroke="#222" stroke-width="1.200" fill="none"/>
</g>
</g>
</svg>

<div id="fade"></div>
<div id="prog"><i class="a"></i><i class="b"></i><i class="c"></i><i class="d"></i></div>
</body></html>
